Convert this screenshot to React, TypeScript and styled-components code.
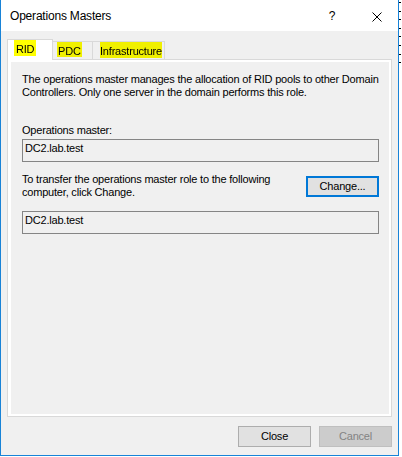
import React from "react";
import styled, { createGlobalStyle } from "styled-components";

const GlobalStyle = createGlobalStyle`
  html, body { margin: 0; padding: 0; background: #ffffff; }
  body { font-family: "Liberation Sans", Arial, sans-serif; }
`;

const Screen = styled.div`
  display: flex;
  align-items: flex-start;
  width: 402px;
  height: 457px;
  background: #ffffff;
`;

const Window = styled.div`
  width: 399px;
  height: 456px;
  box-sizing: border-box;
  border: 1px solid #1883d7;
  border-top: none;
  background: #f0f0f0;
  display: flex;
  flex-direction: column;
  flex: none;
`;

const Ruler = styled.div`
  width: 2px;
  height: 64px;
  background: repeating-linear-gradient(
    to bottom,
    transparent 0 2px,
    #000000 2px 3px,
    transparent 3px 8.6px
  );
`;

const TitleBar = styled.div`
  height: 31px;
  background: #ffffff;
  display: flex;
  align-items: flex-start;
  flex: none;
`;

const Title = styled.div`
  flex: 1;
  padding: 2px 0 0 9px;
  font-size: 12px;
  letter-spacing: -0.2px;
  line-height: 29px;
  color: #000000;
`;

const CaptionButton = styled.div<{ $w: number }>`
  width: ${(p) => p.$w}px;
  height: 31px;
  box-sizing: border-box;
  padding-top: 2px;
  display: flex;
  justify-content: center;
  font-size: 12px;
  line-height: 29px;
  color: #000000;
`;

const CloseGlyph = styled.svg`
  margin-top: 10px;
`;

const Client = styled.div`
  flex: 1;
  display: flex;
  flex-direction: column;
  padding: 8px 6px 0;
`;

const TabRow = styled.div`
  display: flex;
  align-items: flex-end;
  height: 20px;
  position: relative;
  z-index: 1;
`;

const Tab = styled.div<{ $active?: boolean; $w: number; $pl: number }>`
  position: relative;
  z-index: ${(p) => (p.$active ? 2 : 1)};
  box-sizing: border-box;
  width: ${(p) => p.$w}px;
  height: ${(p) => (p.$active ? 21 : 18)}px;
  margin-bottom: ${(p) => (p.$active ? -1 : 0)}px;
  margin-left: ${(p) => (p.$active ? 0 : -1)}px;
  border: 1px solid #d9d9d9;
  border-bottom: none;
  background: ${(p) => (p.$active ? "#ffffff" : "#f0f0f0")};
  padding-left: ${(p) => p.$pl}px;
  font-size: 11px;
  letter-spacing: -0.2px;
  color: #000000;
  &:first-child { margin-left: 0; }
`;

const Highlight = styled.span<{ $h: number; $pad: number }>`
  display: inline-block;
  box-sizing: border-box;
  height: ${(p) => p.$h}px;
  padding: 3px ${(p) => p.$pad}px 0;
  line-height: 13px;
  background: #ffff00;
  mix-blend-mode: multiply;
`;

const Panel = styled.div`
  height: 358px;
  flex: none;
  box-sizing: border-box;
  border: 1px solid #d9d9d9;
  background: #ffffff;
  padding: 2px 2px 2px 3px;
  display: flex;
`;

const Page = styled.div`
  flex: 1;
  background: #f0f0f0;
  padding: 11px 10px 0 11px;
  display: flex;
  flex-direction: column;
  font-size: 11px;
  letter-spacing: -0.2px;
  line-height: 13px;
  color: #000000;
`;

const Description = styled.p`
  margin: 0;
`;

const Label = styled.div`
  margin-top: 25px;
`;

const Field = styled.div<{ $mt: number }>`
  margin-top: ${(p) => p.$mt}px;
  height: 23px;
  box-sizing: border-box;
  border: 1px solid #858585;
  padding: 2px 2px 0;
  line-height: 13px;
`;

const TransferRow = styled.div`
  margin-top: 11px;
  display: flex;
  justify-content: space-between;
  align-items: flex-start;
`;

const Button = styled.button<{ $variant?: "default" | "disabled" }>`
  width: 73px;
  height: 21px;
  box-sizing: border-box;
  padding: 0;
  font-family: "Liberation Sans", Arial, sans-serif;
  font-size: 11px;
  letter-spacing: -0.2px;
  line-height: 13px;
  background: ${(p) => (p.$variant === "disabled" ? "#cccccc" : "#e1e1e1")};
  color: ${(p) => (p.$variant === "disabled" ? "#838383" : "#000000")};
  border: ${(p) =>
    p.$variant === "default"
      ? "2px solid #0078d7"
      : p.$variant === "disabled"
      ? "1px solid #bfbfbf"
      : "1px solid #adadad"};
  flex: none;
`;

const ChangeButton = styled(Button)`
  margin-top: 3px;
`;

const ButtonRow = styled.div`
  display: flex;
  justify-content: flex-end;
  gap: 8px;
  margin-top: 9px;
`;

export default function App() {
  return (
    <>
      <GlobalStyle />
      <Screen>
        <Window>
          <TitleBar>
            <Title>Operations Masters</Title>
            <CaptionButton $w={48}>?</CaptionButton>
            <CaptionButton $w={42}>
              <CloseGlyph width="10" height="10" viewBox="0 0 10 10">
                <path d="M0.5 0.5 L9.5 9.5 M9.5 0.5 L0.5 9.5" stroke="#000" strokeWidth="1" fill="none" />
              </CloseGlyph>
            </CaptionButton>
          </TitleBar>
          <Client>
            <TabRow>
              <Tab $active $w={46} $pl={6}>
                <Highlight $h={16} $pad={2}>RID</Highlight>
              </Tab>
              <Tab $w={41} $pl={4}>
                <Highlight $h={15} $pad={1}>PDC</Highlight>
              </Tab>
              <Tab $w={73} $pl={7}>
                <Highlight $h={16} $pad={0}>Infrastructure</Highlight>
              </Tab>
            </TabRow>
            <Panel>
              <Page>
                <Description>
                  The operations master manages the allocation of RID pools to other Domain
                  <br />
                  Controllers. Only one server in the domain performs this role.
                </Description>
                <Label>Operations master:</Label>
                <Field $mt={2}>DC2.lab.test</Field>
                <TransferRow>
                  <div>
                    To transfer the operations master role to the following
                    <br />
                    computer, click Change.
                  </div>
                  <ChangeButton $variant="default">Change...</ChangeButton>
                </TransferRow>
                <Field $mt={12}>DC2.lab.test</Field>
              </Page>
            </Panel>
            <ButtonRow>
              <Button>Close</Button>
              <Button $variant="disabled">Cancel</Button>
            </ButtonRow>
          </Client>
        </Window>
        <Ruler />
      </Screen>
    </>
  );
}
